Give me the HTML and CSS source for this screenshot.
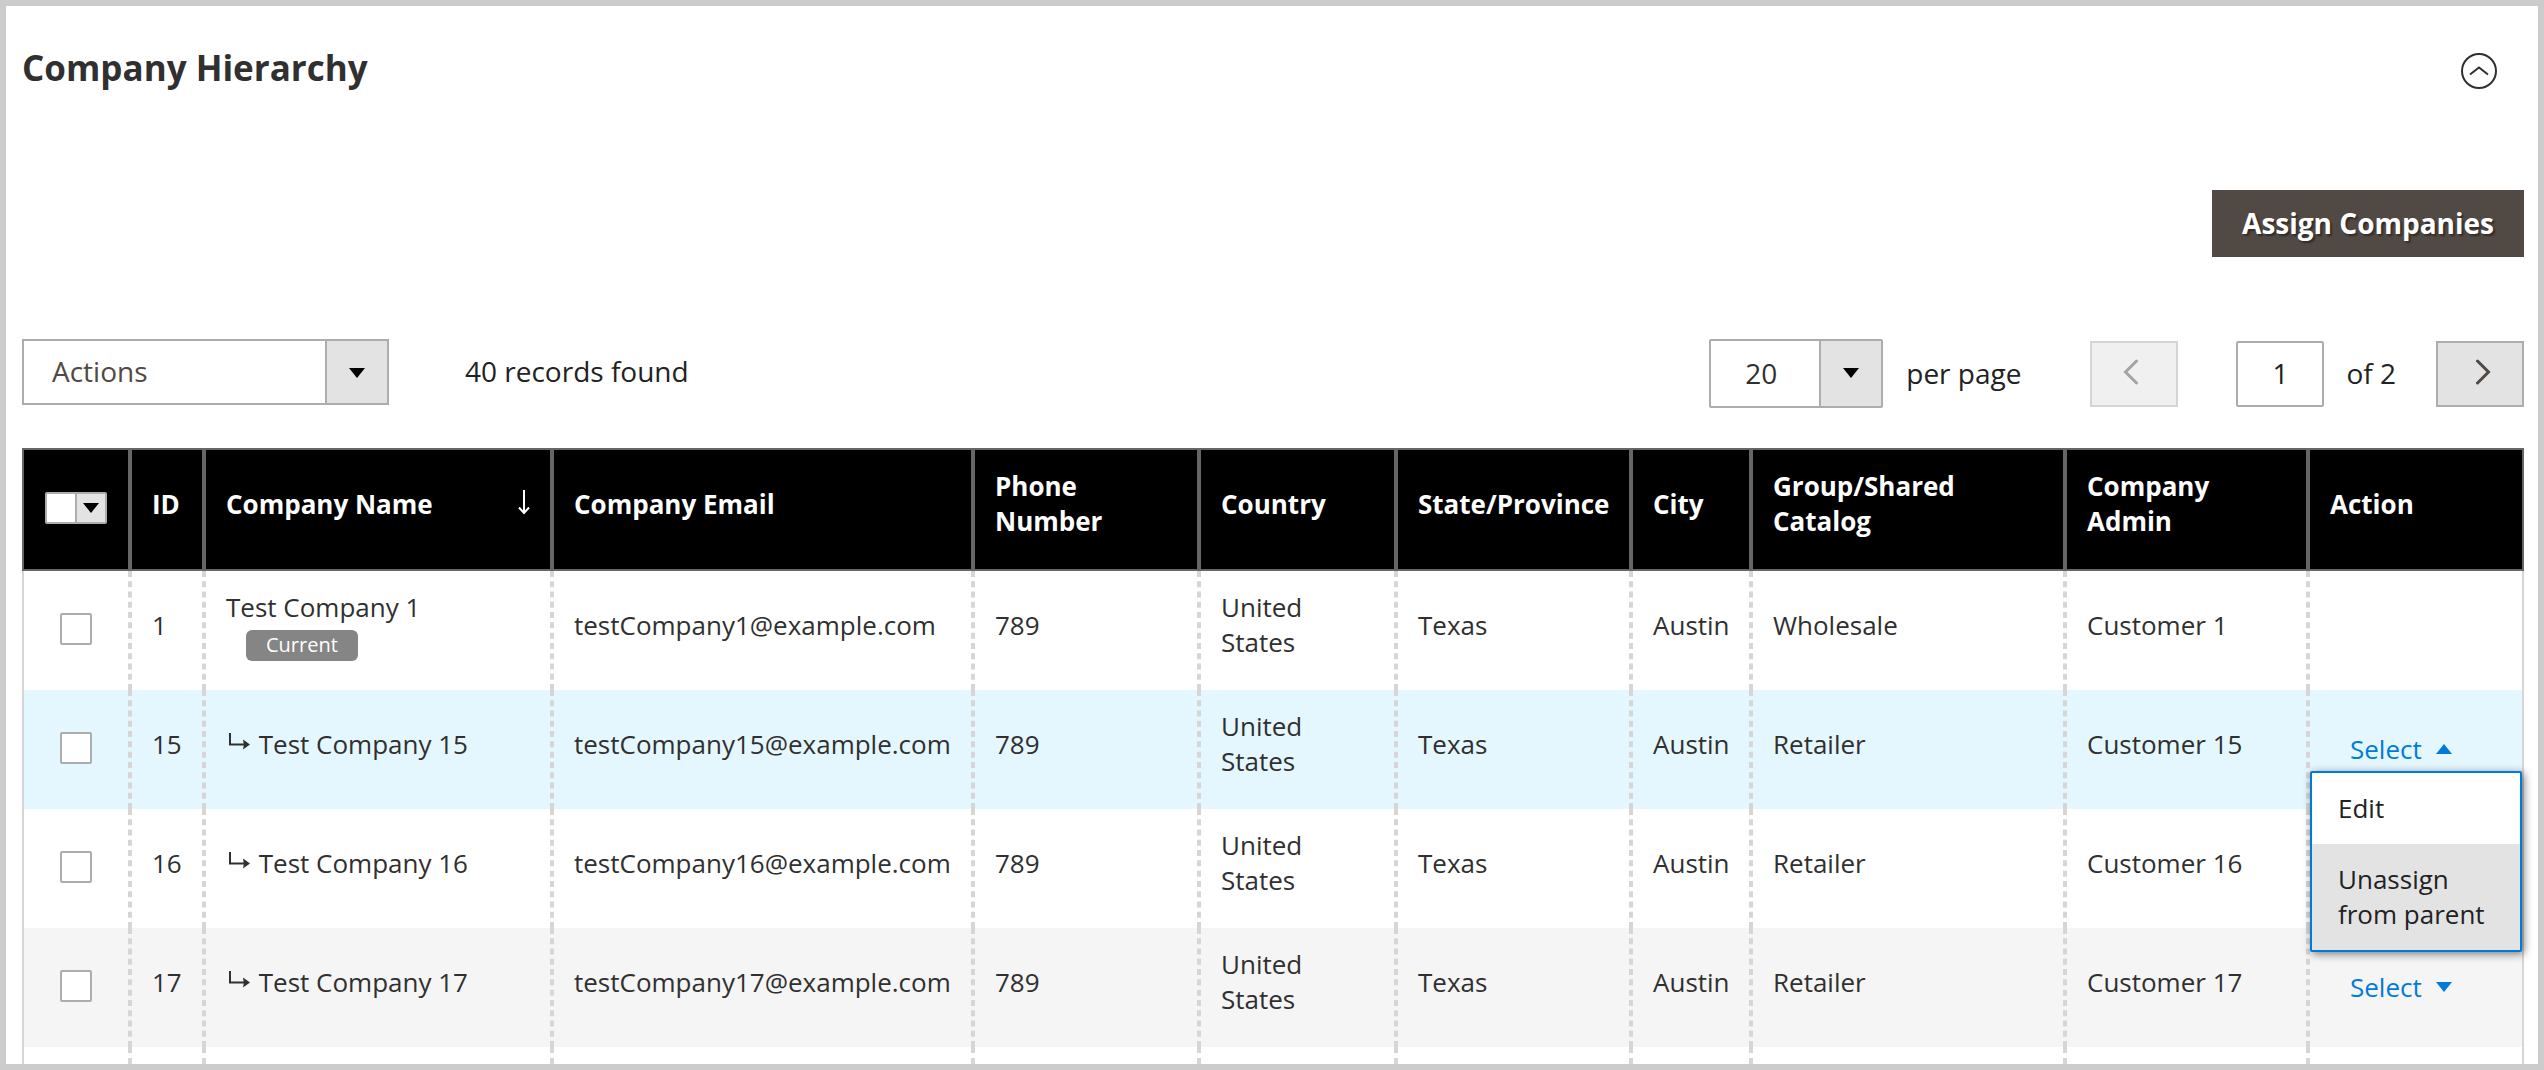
FILE: index.html
```html
<!DOCTYPE html>
<html lang="en">
<head>
<meta charset="utf-8">
<title>Company Hierarchy</title>
<link rel="stylesheet" href="styles.css">
</head>
<body>
<svg class="sprite" aria-hidden="true">
  <symbol id="child" viewBox="0 0 26 20"><path d="M4 1v11.500h14" fill="none" stroke="currentColor" stroke-width="2"/><path d="M17 7.500 24 12.500l-7 5q1.500-5 0-10z" fill="currentColor"/></symbol>
  <symbol id="down" viewBox="0 0 16 10"><path d="M0 0h16L8 10z" fill="currentColor"/></symbol>
</svg>
<main class="panel">
  <header class="panel-head">
    <h1>Company Hierarchy</h1>
    <button class="collapse" type="button" aria-label="Collapse section">
      <svg viewBox="0 0 36 36" width="36" height="36" fill="none" stroke="#303030" stroke-width="2"><circle cx="18" cy="18" r="17"/><path d="m9 21.500 9-7 9 7"/></svg>
    </button>
  </header>
  <div class="primary"><button class="assign" type="button">Assign Companies</button></div>

  <div class="toolbar">
    <div class="select actions">
      <select aria-label="Actions"><option>Actions</option></select>
      <svg class="caret"><use href="#down"/></svg>
    </div>
    <p class="count">40 records found</p>
    <div class="select size">
      <select id="page-size"><option>20</option></select>
      <svg class="caret"><use href="#down"/></svg>
    </div>
    <label class="per-page" for="page-size">per page</label>
    <nav class="pager" aria-label="Pages">
      <button class="step prev" type="button" disabled aria-label="Previous page"><svg viewBox="0 0 16 26" width="16" height="26" fill="none" stroke="currentColor" stroke-width="3" stroke-linecap="round"><path d="M13.500 2 2.500 13l11 11"/></svg></button>
      <input id="page" class="page" type="text" value="1">
      <label class="total" for="page">of 2</label>
      <button class="step next-page" type="button" aria-label="Next page"><svg viewBox="0 0 16 26" width="16" height="26" fill="none" stroke="currentColor" stroke-width="3" stroke-linecap="round"><path d="m2.500 2 11 11-11 11"/></svg></button>
    </nav>
  </div>

  <table class="grid">
    <colgroup>
      <col class="c-check"><col class="c-id"><col class="c-name"><col class="c-email"><col class="c-phone"><col class="c-country"><col class="c-state"><col class="c-city"><col><col class="c-admin"><col class="c-action">
    </colgroup>
    <thead>
      <tr>
        <th scope="col" class="check"><span class="multi"><input type="checkbox" aria-label="Select all"><button type="button" aria-label="Selection options"><svg class="caret"><use href="#down"/></svg></button></span></th>
        <th scope="col">ID</th>
        <th scope="col"><span class="sorted">Company Name <svg viewBox="0 0 12 26" width="12" height="26" fill="none" stroke="#fff" stroke-width="2"><path d="M6 1v23M1 18.500l5 5.500 5-5.500"/></svg></span></th>
        <th scope="col">Company Email</th>
        <th scope="col">Phone Number</th>
        <th scope="col">Country</th>
        <th scope="col">State/Province</th>
        <th scope="col">City</th>
        <th scope="col">Group/Shared Catalog</th>
        <th scope="col">Company Admin</th>
        <th scope="col">Action</th>
      </tr>
    </thead>
    <tbody>
      <tr>
        <td class="check"><input type="checkbox" aria-label="Select Test Company 1"></td>
        <td>1</td><td>Test Company 1<br><span class="badge">Current</span></td>
        <td>testCompany1@example.com</td><td>789</td><td>United States</td><td>Texas</td><td>Austin</td><td>Wholesale</td><td>Customer 1</td><td></td>
      </tr>
      <tr class="active">
        <td class="check"><input type="checkbox" aria-label="Select Test Company 15"></td>
        <td>15</td><td><svg class="child"><use href="#child"/></svg> Test Company 15</td>
        <td>testCompany15@example.com</td><td>789</td><td>United States</td><td>Texas</td><td>Austin</td><td>Retailer</td><td>Customer 15</td>
        <td class="action">
          <button class="row-select open" type="button" aria-expanded="true">Select <svg class="caret"><use href="#down"/></svg></button>
          <ul class="menu">
            <li><a href="#edit">Edit</a></li>
            <li><a class="hover" href="#unassign">Unassign from parent</a></li>
          </ul>
        </td>
      </tr>
      <tr>
        <td class="check"><input type="checkbox" aria-label="Select Test Company 16"></td>
        <td>16</td><td><svg class="child"><use href="#child"/></svg> Test Company 16</td>
        <td>testCompany16@example.com</td><td>789</td><td>United States</td><td>Texas</td><td>Austin</td><td>Retailer</td><td>Customer 16</td><td></td>
      </tr>
      <tr class="even">
        <td class="check"><input type="checkbox" aria-label="Select Test Company 17"></td>
        <td>17</td><td><svg class="child"><use href="#child"/></svg> Test Company 17</td>
        <td>testCompany17@example.com</td><td>789</td><td>United States</td><td>Texas</td><td>Austin</td><td>Retailer</td><td>Customer 17</td>
        <td class="action"><button class="row-select" type="button">Select <svg class="caret"><use href="#down"/></svg></button></td>
      </tr>
      <tr class="partial">
        <td></td><td></td><td></td><td></td><td></td><td></td><td></td><td></td><td></td><td></td><td></td>
      </tr>
    </tbody>
  </table>
</main>
</body>
</html>
```
FILE: styles.css
```css
* { box-sizing: border-box; }

body {
  margin: 0;
  min-height: 100vh;
  border: 6px solid #ccc;
  background: #fff;
  color: #303030;
  font: 28px/38px "Open Sans", "Noto Sans", sans-serif;
}

button, input, select { font: inherit; color: inherit; margin: 0; }
button { padding: 0; border: 0; background: none; cursor: pointer; }
.sprite { display: none; }
.caret { display: block; width: 16px; height: 10px; color: #000; }

.panel { padding: 38px 14px 0 16px; }

.panel-head {
  display: flex;
  justify-content: space-between;
  align-items: center;
  padding-right: 27px;
}
h1 { margin: 0; font-size: 35px; line-height: 48px; font-weight: 700; }
.collapse { height: 36px; margin-top: 6px; }
.collapse svg { display: block; }

.primary { display: flex; justify-content: flex-end; margin-top: 98px; }
.assign {
  height: 67px;
  padding: 0 30px 2px;
  background: #514943;
  color: #fff;
  font-weight: 700;
  text-shadow: 2px 2px 2px rgba(0, 0, 0, .4);
}

.toolbar { display: flex; align-items: center; margin: 82px 0 40px; color: #222; }
.select { position: relative; border: 2px solid #adadad; background: #e3e3e3; }
.select select {
  display: block;
  width: 100%;
  height: 100%;
  border: 0;
  border-radius: 0;
  appearance: none;
  background: linear-gradient(#adadad, #adadad) right 60px top / 2px 100% no-repeat, linear-gradient(90deg, #fff calc(100% - 60px), #e3e3e3 0);
  color: #303030;
}
.select .caret { position: absolute; right: 22px; top: 27px; pointer-events: none; }
.actions { width: 367px; height: 66px; margin-bottom: 3px; }
.actions select { padding: 0 28px 2px; color: #514943; }
.count { margin: 0 auto 5px 76px; }
.size { width: 174px; height: 69px; border-radius: 2px; }
.size select { padding: 0 34px 2px; }
.per-page { margin-left: 23px; padding-bottom: 2px; }
.pager { display: flex; align-items: center; margin-left: 69px; padding-top: 1px; }
.step {
  display: grid;
  place-items: center;
  width: 88px;
  height: 66px;
  border: 2px solid #adadad;
  background: #e3e3e3;
  color: #514943;
}
.step svg { margin-bottom: 4px; }
.prev { padding-right: 6px; }
.next-page { padding-left: 6px; }
.step:disabled { opacity: .5; }
.page {
  width: 88px;
  height: 66px;
  margin: 0 22px 0 58px;
  padding: 0 0 2px;
  border: 2px solid #adadad;
  border-radius: 2px;
  text-align: center;
}
.total { margin-right: 40px; padding-bottom: 2px; }

.grid {
  width: 100%;
  table-layout: fixed;
  border-collapse: separate;
  border-spacing: 0;
  font-size: 26px;
  line-height: 35px;
}
.c-check { width: 108px; }
.c-id { width: 74px; }
.c-name { width: 348px; }
.c-email { width: 421px; }
.c-phone { width: 226px; }
.c-country { width: 197px; }
.c-state { width: 235px; }
.c-city { width: 120px; }
.c-admin { width: 243px; }
.c-action { width: 216px; }

th, td { padding: 19px 16px 30px 20px; text-align: left; vertical-align: middle; }
th { border: 2px solid #666; background: #000; color: #fff; font-weight: 700; }
td { height: 119px; border: 0 dashed #d6d6d6; border-width: 0 2px; }
td:first-child { border-left-style: solid; }
td:last-child { border-right-style: solid; }
.active td { background: #e5f7fe; }
.even td { background: #f5f5f5; }
.partial td { height: 17px; padding: 0; }

.check { padding: 0 0 4px; }
.check input {
  display: block;
  appearance: none;
  width: 32px;
  height: 32px;
  margin: 0 auto;
  border: 2px solid #adadad;
  border-radius: 2px;
  background: #fff;
}
.check .multi { display: flex; width: 62px; margin: 0 auto; border: 2px solid #adadad; border-radius: 2px; }
.multi input { width: 28px; height: 28px; border: 0; border-radius: 0; }
.multi button { display: grid; place-items: center; width: 30px; height: 28px; border-left: 2px solid #adadad; background: #e3e3e3; }

.sorted { display: flex; justify-content: space-between; align-items: center; padding-right: 4px; }
.sorted svg { margin-bottom: 4px; }
.child { width: 26px; height: 20px; vertical-align: 2px; }
.badge {
  display: inline-block;
  margin: -2px 0 -2px 20px;
  padding: 1px 20px 2px;
  border-radius: 6px;
  background: #858585;
  color: #fff;
  font-size: 20px;
  line-height: 28px;
}

.action { position: relative; padding: 24px 0 25px 40px; }
.row-select { display: flex; align-items: center; gap: 14px; color: #007bdb; }
.row-select .caret { color: inherit; }
.open .caret { transform: rotate(180deg); }
.menu {
  position: absolute;
  z-index: 1;
  top: 81px;
  left: 0;
  right: 0;
  margin: 0;
  padding: 0;
  border: 2px solid #007bdb;
  border-radius: 2px;
  background: #fff;
  box-shadow: 2px 2px 8px rgba(0, 0, 0, .5);
  list-style: none;
}
.menu a { display: block; padding: 18px 26px; color: #222; text-decoration: none; }
.menu .hover { background: #e3e3e3; }
```
